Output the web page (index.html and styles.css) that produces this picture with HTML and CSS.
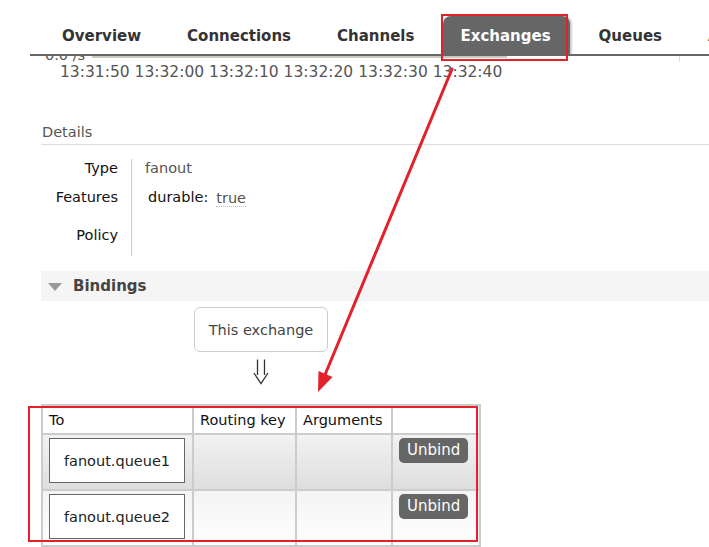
FILE: index.html
```html
<!DOCTYPE html>
<html>
<head>
<meta charset="utf-8">
<title>Exchange: fanout</title>
<link rel="stylesheet" href="styles.css">
</head>
<body>
<div class="page">
  <nav class="tabs">
    <ul>
      <li>Overview</li>
      <li>Connections</li>
      <li>Channels</li>
      <li class="active">Exchanges</li>
      <li>Queues</li>
      <li>Admin</li>
    </ul>
  </nav>

  <div class="chart">
    <div class="chart-top">
      <span class="rate">0.0 /s</span>
      <span class="bar"></span>
      <span class="edge"></span>
    </div>
    <div class="times">13:31:50 13:32:00 13:32:10 13:32:20 13:32:30 13:32:40</div>
  </div>

  <div class="content">
    <section class="details">
      <h3 class="details-title">Details</h3>
      <div class="facts">
        <div class="k r1">Type</div>
        <div class="v r1">fanout</div>
        <div class="k r2">Features</div>
        <div class="v r2"><span class="feat">durable:</span><span class="true">true</span></div>
        <div class="k r3">Policy</div>
        <div class="v r3"></div>
      </div>
    </section>

    <section class="bindings">
      <h2 class="section-bar"><span class="tri"></span>Bindings</h2>
      <div class="diagram">
        <div class="this-ex">This exchange</div>
        <div class="darrow">
          <svg class="darrow-icon" width="16" height="26" viewBox="0 0 16 26" xmlns="http://www.w3.org/2000/svg" aria-label="&#8659;">
            <path d="M4.5 0.5 V16 M11.5 0.5 V16 M1 14 L8 24.5 L15 14" fill="none" stroke="#333" stroke-width="1.3" stroke-linejoin="miter"/>
          </svg>
        </div>
        <table class="btable">
          <colgroup>
            <col class="c1"><col class="c2"><col class="c3"><col class="c4">
          </colgroup>
          <thead>
            <tr class="hrow">
              <th>To</th>
              <th>Routing key</th>
              <th>Arguments</th>
              <th></th>
            </tr>
          </thead>
          <tbody>
            <tr class="row1">
              <td><div class="qbox">fanout.queue1</div></td>
              <td></td>
              <td></td>
              <td><span class="btn">Unbind</span></td>
            </tr>
            <tr class="row2">
              <td><div class="qbox">fanout.queue2</div></td>
              <td></td>
              <td></td>
              <td><span class="btn">Unbind</span></td>
            </tr>
          </tbody>
        </table>
      </div>
    </section>
  </div>
</div>

<div class="annot box1"></div>
<div class="annot box2"></div>
<svg class="arrow" viewBox="0 0 709 547" xmlns="http://www.w3.org/2000/svg">
  <line x1="452" y1="69" x2="324.5" y2="376" stroke="#e3212b" stroke-width="3" stroke-linecap="round"/>
  <polygon points="318,392 332.5,377 318.5,371" fill="#e3212b"/>
</svg>
</body>
</html>
```

FILE: styles.css
```css
html, body {
  margin: 0;
  padding: 0;
}

body {
  width: 709px;
  height: 547px;
  overflow: hidden;
  position: relative;
  background: #fff;
  font-family: "DejaVu Sans", Verdana, sans-serif;
  color: #333;
}

/* ---------- tabs ---------- */
.tabs {
  margin-left: 30px;
  padding-top: 16px;
  border-bottom: 2px solid #666;
  overflow: hidden;
}

.tabs ul {
  display: flex;
  gap: 12px;
  list-style: none;
  margin: 0;
  padding: 0 0 0 15px;
  white-space: nowrap;
}

.tabs li {
  flex: none;
  height: 38px;
  line-height: 40px;
  padding: 0 17px;
  font-weight: bold;
  font-size: 15px;
  color: #333;
  border-radius: 8px 8px 0 0;
}

.tabs li.active {
  background: #666;
  color: #fff;
  padding-right: 19px;
  box-shadow: 2px 0 2px rgba(0, 0, 0, 0.2);
}

/* ---------- chart remnant ---------- */
.chart-top {
  display: flex;
  align-items: flex-end;
  height: 6px;
  overflow: hidden;
  padding-left: 45px;
}

.rate {
  font-size: 14.5px;
  line-height: 13px;
  color: #555;
}

.bar {
  align-self: flex-start;
  width: 415px;
  height: 2px;
  margin-left: 7px;
  background: #c6cac0;
}

.edge {
  align-self: stretch;
  width: 1px;
  margin-left: auto;
  margin-right: 29px;
  background: #ddd;
}

.times {
  padding-left: 60px;
  margin-top: 1px;
  font-size: 15.5px;
  line-height: 18px;
  color: #555;
}

/* ---------- content ---------- */
.content {
  margin-left: 41px;
}

.details-title {
  margin: 42px 0 0;
  padding: 0 0 3px 1px;
  font-weight: normal;
  font-size: 14.5px;
  line-height: 18px;
  color: #555;
  border-bottom: 1px solid #ddd;
}

.facts {
  display: grid;
  grid-template-columns: 90px 1fr;
  margin-top: 14px;
  font-size: 14.5px;
  line-height: 18px;
}

.k {
  text-align: right;
  padding-right: 13px;
  color: #111;
}

.v {
  border-left: 1px solid #ccc;
  padding-left: 13px;
  color: #555;
}

.r1 { padding-bottom: 11px; }
.r2 { padding-bottom: 20px; }
.r3 { padding-bottom: 12px; }

.feat {
  margin-left: 3px;
  color: #111;
}

.true {
  display: inline-block;
  margin-left: 8px;
  position: relative;
  top: 1px;
  line-height: 16px;
  border-bottom: 1px dotted #bbb;
  color: #555;
}

/* ---------- bindings ---------- */
.section-bar {
  display: flex;
  align-items: center;
  height: 30px;
  margin: 15px 0 0;
  background: #f5f5f5;
  font-size: 15px;
  font-weight: bold;
  color: #444;
}

.tri {
  width: 0;
  height: 0;
  margin: 1px 11px 0 7px;
  border-left: 7px solid transparent;
  border-right: 7px solid transparent;
  border-top: 8px solid #999;
}

.diagram {
  display: flex;
  flex-direction: column;
  align-items: center;
  width: 440px;
  margin-top: 6px;
}

.this-ex {
  display: flex;
  align-items: center;
  justify-content: center;
  width: 132px;
  height: 43px;
  border: 1px solid #ccc;
  border-radius: 6px;
  font-size: 14.5px;
  color: #444;
}

.darrow {
  display: flex;
  justify-content: center;
  height: 52px;
  padding-top: 7px;
  box-sizing: border-box;
}

.darrow-icon {
  display: block;
}

.btable {
  border-collapse: collapse;
  table-layout: fixed;
  width: 440px;
  font-size: 14.5px;
}

.c1 { width: 151px; }
.c2 { width: 103px; }
.c3 { width: 96px; }
.c4 { width: 88px; }

.btable th,
.btable td {
  border: 2px solid #ccc;
}

.btable th {
  padding: 0 6px;
  text-align: left;
  font-weight: normal;
  color: #111;
  vertical-align: middle;
  white-space: nowrap;
}

.hrow { height: 29px; }
.row1 { height: 56px; }
.row2 { height: 56px; }

.btable td {
  padding: 3px 6px;
  vertical-align: top;
}

.row1 td {
  background: linear-gradient(#f2f2f2, #dedede);
}

.row2 td {
  background: linear-gradient(#f4f4f4, #fefefe);
}

.qbox {
  display: flex;
  align-items: center;
  justify-content: center;
  width: 134px;
  height: 43px;
  border: 1px solid #666;
  background: #fff;
  color: #222;
}

.btn {
  display: inline-block;
  height: 25px;
  line-height: 25px;
  padding: 0 8px;
  border-radius: 5px;
  background: #666;
  color: #fff;
  font-size: 15px;
}

/* ---------- annotations ---------- */
.annot {
  position: absolute;
  box-sizing: border-box;
  border: 2px solid #e3212b;
}

.box1 {
  left: 441px;
  top: 14px;
  width: 127px;
  height: 47px;
}

.box2 {
  left: 28px;
  top: 406px;
  width: 450px;
  height: 136px;
}

.arrow {
  position: absolute;
  left: 0;
  top: 0;
  width: 709px;
  height: 547px;
  pointer-events: none;
}
```
